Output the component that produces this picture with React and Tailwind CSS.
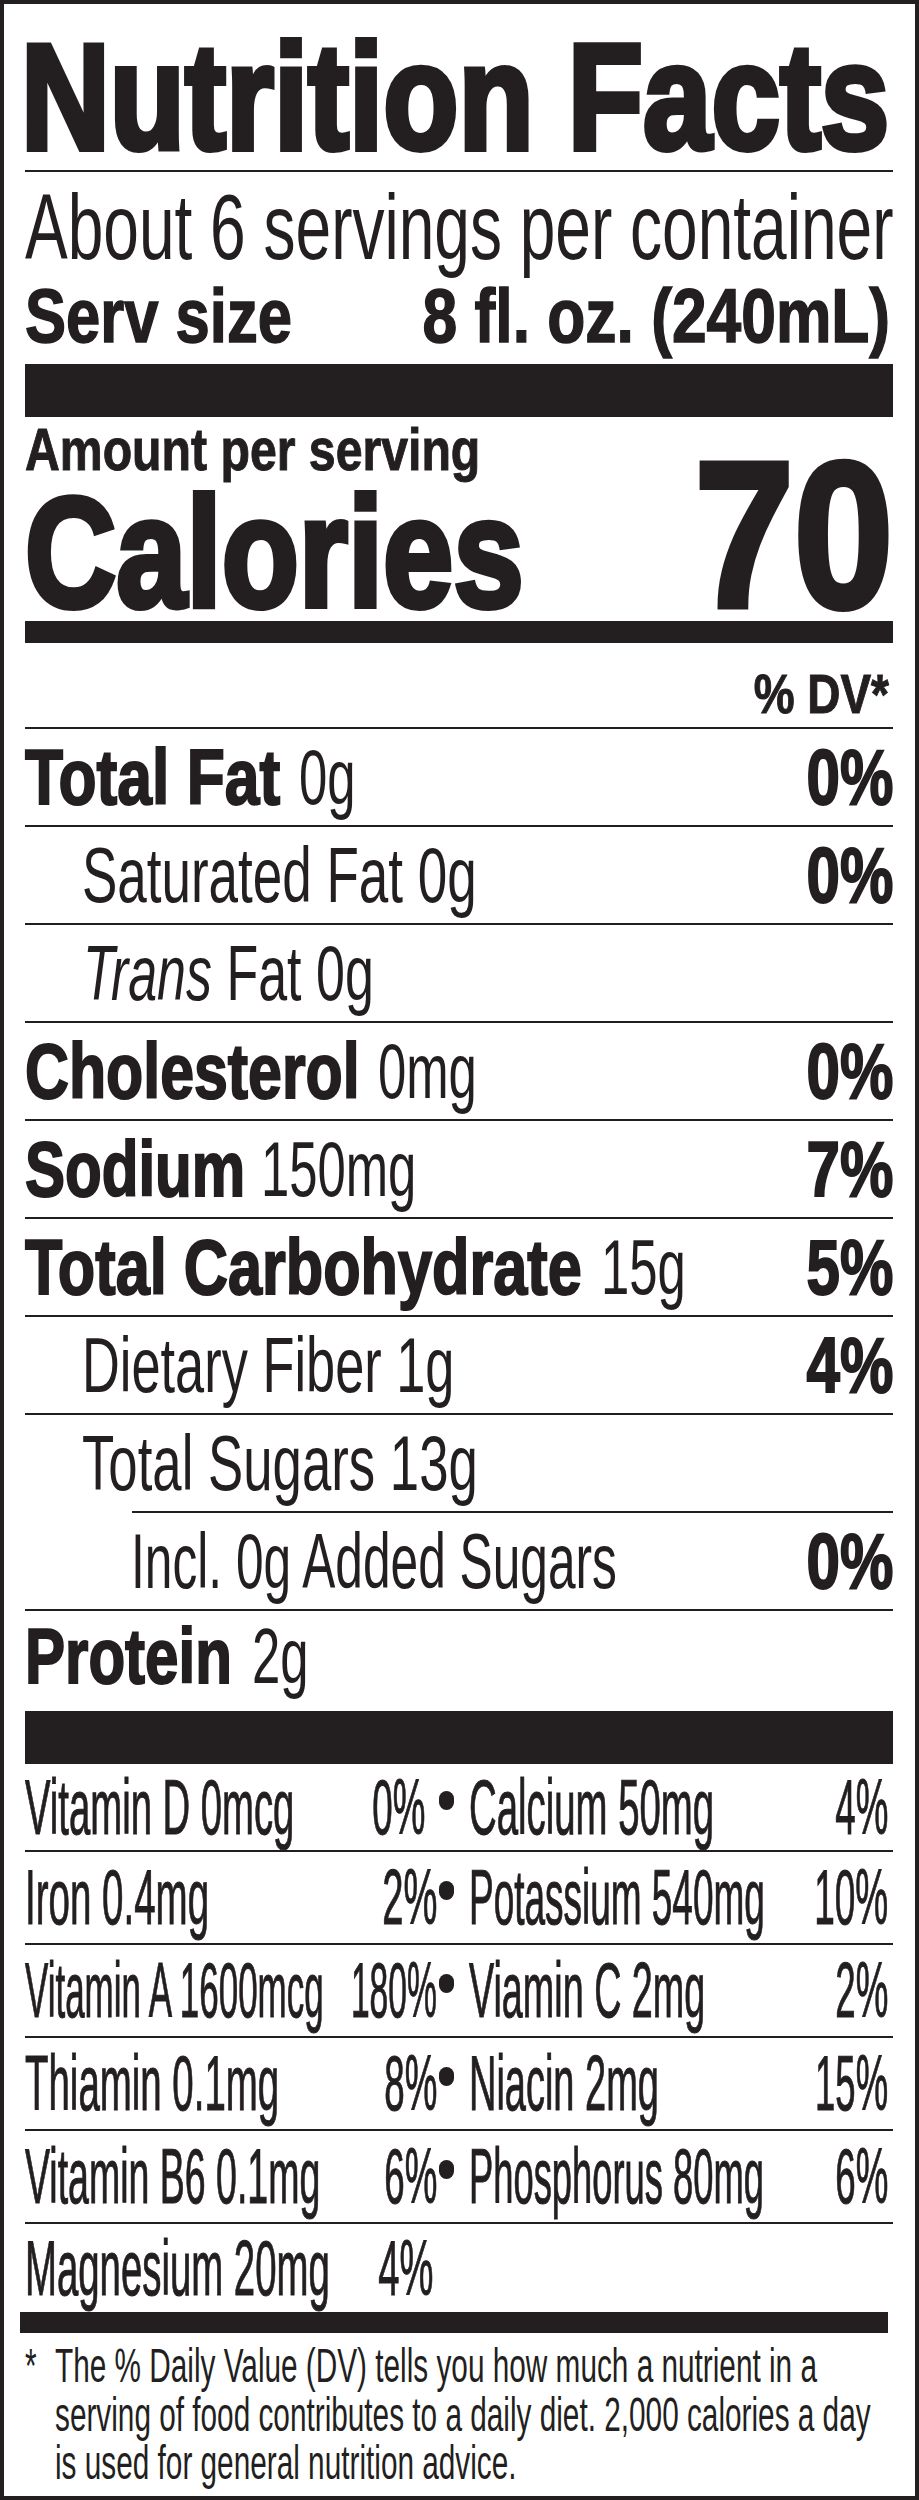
import React from 'react';

// Liberation Sans squeezed on the x axis to stand in for Helvetica Condensed
const Sq = ({ s, right = false, className = '', children }) => (
  <span className={`inline-block whitespace-nowrap ${right ? 'origin-right' : 'origin-left'} ${s} ${className}`}>
    {children}
  </span>
);

const Rule = ({ className = '' }) => <div className={`h-[2px] bg-[#231f20] ${className}`} />;

const BOLD = 'font-bold [-webkit-text-stroke:2px_#231f20]';
const THIN = '[-webkit-text-stroke:1px_#231f20]';

const nutrients = [
  { bold: 'Total Fat', bs: 'scale-x-[0.81]', boldW: 'w-[274px]', amt: '0g', as: 'scale-x-[0.66]', dv: '0%' },
  { amt: 'Saturated Fat 0g', as: 'scale-x-[0.688]', indent: 'pl-[57px]', dv: '0%' },
  { trans: true, as: 'scale-x-[0.675]', indent: 'pl-[58px]' },
  { bold: 'Cholesterol', bs: 'scale-x-[0.79]', boldW: 'w-[353px]', amt: '0mg', as: 'scale-x-[0.66]', dv: '0%' },
  { bold: 'Sodium', bs: 'scale-x-[0.78]', boldW: 'w-[236px]', amt: '150mg', as: 'scale-x-[0.66]', dv: '7%' },
  { bold: 'Total Carbohydrate', bs: 'scale-x-[0.795]', boldW: 'w-[576px]', amt: '15g', as: 'scale-x-[0.66]', dv: '5%' },
  { amt: 'Dietary Fiber 1g', as: 'scale-x-[0.68]', indent: 'pl-[57px]', dv: '4%' },
  { amt: 'Total Sugars 13g', as: 'scale-x-[0.685]', indent: 'pl-[57px]', rule: 'ml-[107px]' },
  { amt: 'Incl. 0g Added Sugars', as: 'scale-x-[0.645]', indent: 'pl-[106px]', dv: '0%' },
];

const vitamins = [
  {
    a: 'Vitamin D 0mcg', as: 'scale-x-[0.497]', ap: '0%', aps: 'scale-x-[0.477]',
    b: 'Calcium 50mg', bs: 'scale-x-[0.498]', bp: '4%', bps: 'scale-x-[0.477]',
    h: 'h-[86px] leading-[86px]', gap: 'mr-[12px]',
  },
  {
    a: 'Iron 0.4mg', as: 'scale-x-[0.5]', ap: '2%', aps: 'scale-x-[0.495]',
    b: 'Potassium 540mg', bs: 'scale-x-[0.48]', bp: '10%', bps: 'scale-x-[0.48]',
    h: 'h-[91px] leading-[91px]',
  },
  {
    a: 'Vitamin A 1600mcg', as: 'scale-x-[0.454]', ap: '180%', aps: 'scale-x-[0.437]',
    b: 'Viamin C 2mg', bs: 'scale-x-[0.49]', bp: '2%', bps: 'scale-x-[0.477]',
    h: 'h-[91px] leading-[91px]',
  },
  {
    a: 'Thiamin 0.1mg', as: 'scale-x-[0.499]', ap: '8%', aps: 'scale-x-[0.477]',
    b: 'Niacin 2mg', bs: 'scale-x-[0.493]', bp: '15%', bps: 'scale-x-[0.474]',
    h: 'h-[91px] leading-[91px]',
  },
  {
    a: 'Vitamin B6 0.1mg', as: 'scale-x-[0.487]', ap: '6%', aps: 'scale-x-[0.477]',
    b: 'Phosphorus 80mg', bs: 'scale-x-[0.472]', bp: '6%', bps: 'scale-x-[0.477]',
    h: 'h-[91px] leading-[91px]',
  },
];

const NutrientRow = ({ n }) => (
  <div className={`flex h-[96px] leading-[96px] ${n.indent || ''}`}>
    <div className="flex min-w-0 flex-1">
      {n.bold && (
        <div className={`shrink-0 whitespace-nowrap ${n.boldW}`}>
          <Sq s={n.bs} className={BOLD}>{n.bold}</Sq>
        </div>
      )}
      <div className="w-0 shrink-0 whitespace-nowrap">
        <Sq s={n.as}>
          {n.trans ? (
            <>
              <i>Trans</i> Fat 0g
            </>
          ) : (
            n.amt
          )}
        </Sq>
      </div>
    </div>
    {n.dv && (
      <div className="shrink-0 whitespace-nowrap">
        <Sq right s="scale-x-[0.78]" className={BOLD}>{n.dv}</Sq>
      </div>
    )}
  </div>
);

const VitaminRow = ({ v }) => (
  <div className={`flex ${v.h}`}>
    <div className="flex w-[412px] shrink-0 justify-between">
      <div className="w-0 shrink-0 whitespace-nowrap">
        <Sq s={v.as} className={THIN}>{v.a}</Sq>
      </div>
      <div className={`shrink-0 whitespace-nowrap ${v.gap || ''}`}>
        <Sq right s={v.aps} className={THIN}>{v.ap}</Sq>
      </div>
    </div>
    <div className="w-[32px] shrink-0 pl-[2px]">
      <span className="mb-[24px] inline-block h-[19px] w-[15px] rounded-full bg-[#231f20]" />
    </div>
    <div className="flex min-w-0 flex-1 justify-between pr-[5px]">
      <div className="w-0 shrink-0 whitespace-nowrap">
        <Sq s={v.bs} className={THIN}>{v.b}</Sq>
      </div>
      <div className="shrink-0 whitespace-nowrap">
        <Sq right s={v.bps} className={THIN}>{v.bp}</Sq>
      </div>
    </div>
  </div>
);

export default function App() {
  return (
    <div className="h-[2500px] w-[919px] overflow-hidden border-4 border-[#231f20] bg-white pl-[21px] pr-[22px] font-['Liberation_Sans',Arial,sans-serif] text-[#231f20]">
      {/* heading */}
      <div className="-ml-[4px] whitespace-nowrap pt-[19px] text-[151px] font-bold leading-[147px]">
        <Sq s="scale-x-[0.815]" className="[-webkit-text-stroke:6px_#231f20]">Nutrition Facts</Sq>
      </div>
      <Rule />

      {/* servings */}
      <div className="whitespace-nowrap text-[92px] leading-[110px]">
        <Sq s="scale-x-[0.696]">About 6 servings per container</Sq>
      </div>
      <div className="flex justify-between text-[76px] font-bold leading-[68px]">
        <div className="w-0 min-w-0 flex-1 whitespace-nowrap">
          <Sq s="scale-x-[0.81]" className="[-webkit-text-stroke:1.5px_#231f20]">Serv size</Sq>
        </div>
        <div className="mr-[3px] shrink-0 whitespace-nowrap">
          <Sq right s="scale-x-[0.82]" className="[-webkit-text-stroke:1.5px_#231f20]">8 fl. oz. (240mL)</Sq>
        </div>
      </div>
      <div className="mt-[14px] h-[53px] bg-[#231f20]" />

      {/* calories */}
      <div className="flex h-[204px]">
        <div className="min-w-0 flex-1 whitespace-nowrap font-bold">
          <div className="text-[59px] leading-[66px]">
            <Sq s="scale-x-[0.817]" className="[-webkit-text-stroke:1px_#231f20]">Amount per serving</Sq>
          </div>
          <div className="text-[156px] leading-[138px]">
            <Sq s="scale-x-[0.81]" className="[-webkit-text-stroke:6px_#231f20]">Calories</Sq>
          </div>
        </div>
        <div className="shrink-0 self-end whitespace-nowrap text-[208px] font-bold leading-[172px]">
          <Sq right s="scale-x-[0.86]" className="[-webkit-text-stroke:6px_#231f20]">70</Sq>
        </div>
      </div>
      <div className="h-[22px] bg-[#231f20]" />

      <div className="flex justify-end pr-[4px] pt-[17px] text-[56px] font-bold leading-[67px]">
        <Sq right s="scale-x-[0.82]" className="[-webkit-text-stroke:1px_#231f20]">% DV*</Sq>
      </div>
      <Rule />

      {/* nutrients */}
      <div className="text-[77px]">
        {nutrients.map((n) => (
          <div key={n.amt || 'trans'}>
            <NutrientRow n={n} />
            <Rule className={n.rule || ''} />
          </div>
        ))}
        <div className="flex h-[100px] leading-[90px]">
          <div className="w-[227px] shrink-0 whitespace-nowrap">
            <Sq s="scale-x-[0.78]" className={BOLD}>Protein</Sq>
          </div>
          <div className="w-0 shrink-0 whitespace-nowrap">
            <Sq s="scale-x-[0.66]">2g</Sq>
          </div>
        </div>
      </div>
      <div className="h-[53px] bg-[#231f20]" />

      {/* vitamins and minerals */}
      <div className="text-[77px]">
        {vitamins.map((v) => (
          <div key={v.a}>
            <VitaminRow v={v} />
            <Rule />
          </div>
        ))}
        <div className="flex h-[88px] leading-[88px]">
          <div className="flex w-[408px] shrink-0 justify-between">
            <div className="w-0 shrink-0 whitespace-nowrap">
              <Sq s="scale-x-[0.498]" className={THIN}>Magnesium 20mg</Sq>
            </div>
            <div className="shrink-0 whitespace-nowrap">
              <Sq right s="scale-x-[0.495]" className={THIN}>4%</Sq>
            </div>
          </div>
        </div>
      </div>
      <div className="-ml-[5px] mr-[5px] h-[21px] bg-[#231f20]" />

      {/* footnote */}
      <div className="flex pt-[9px] text-[48px] leading-[48.5px]">
        <div className="w-[30px] shrink-0 whitespace-nowrap">
          <Sq s="scale-x-[0.62]">*</Sq>
        </div>
        <div className="min-w-0 flex-1 whitespace-nowrap">
          <div>
            <Sq s="scale-x-[0.62]">The % Daily Value (DV) tells you how much a nutrient in a</Sq>
          </div>
          <div>
            <Sq s="scale-x-[0.62]">serving of food contributes to a daily diet. 2,000 calories a day</Sq>
          </div>
          <div>
            <Sq s="scale-x-[0.62]">is used for general nutrition advice.</Sq>
          </div>
        </div>
      </div>
    </div>
  );
}
